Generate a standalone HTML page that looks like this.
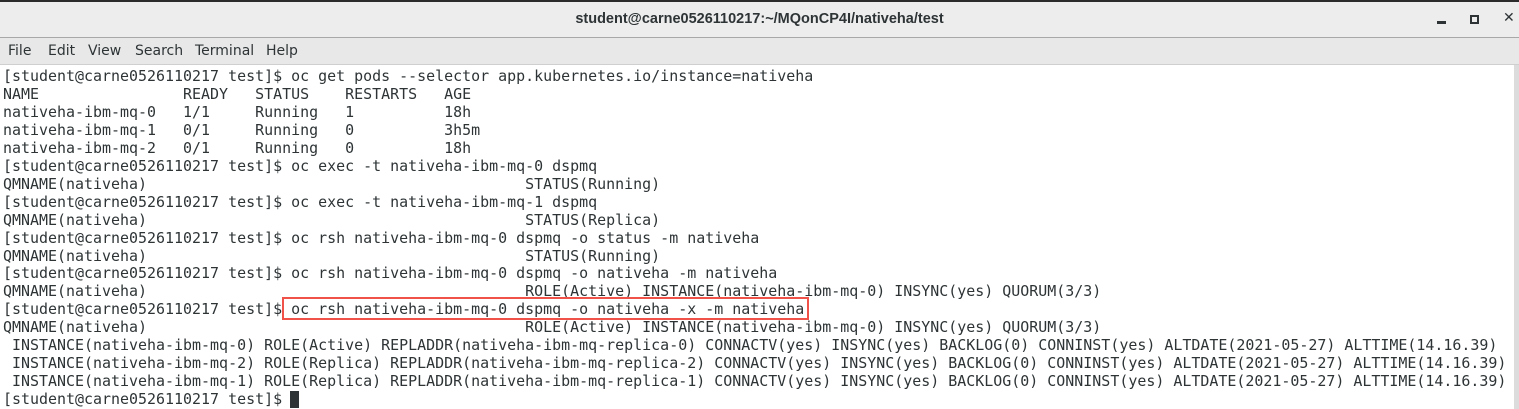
<!DOCTYPE html>
<html><head><style>
html,body{margin:0;padding:0;width:1519px;height:409px;overflow:hidden;background:#fff;font-family:"DejaVu Sans","Liberation Sans",sans-serif}
#top{position:absolute;left:0;top:0;width:1519px;height:2px;background:#2b2b2b}
#title{position:absolute;left:0;top:2px;width:1519px;height:35px;background:#ededed;border-bottom:1px solid #a8a8a8}
#title .t{position:absolute;left:0;right:0;top:9px;text-align:center;font-family:"Liberation Sans",sans-serif;font-size:14.5px;font-weight:bold;color:#2e3436}
#menu{position:absolute;left:0;top:38px;width:1519px;height:26px;background:#e8e8e8;border-bottom:1px solid #cfcfcf;font-size:14px;color:#2e3436}
#menu span{position:absolute;top:5px}
#term{position:absolute;left:3px;top:68px;font-family:"DejaVu Sans Mono","Liberation Mono",monospace;font-size:14.96px;line-height:17.95px;white-space:pre;color:#2e3436}
#sb{position:absolute;left:1514px;top:65px;width:5px;height:344px;background:#dcdcdc}
#box{position:absolute;left:282px;top:297px;width:523px;height:19px;border:2px solid #f0524a}
#cur{position:absolute;left:290px;top:391px;width:9px;height:17px;background:#2e3436}
</style></head><body>
<div id="top"></div>
<div id="title"><div class="t">student@carne0526110217:~/MQonCP4I/nativeha/test</div>
<div style="position:absolute;left:1437px;top:19px;width:9px;height:3px;background:#2e3436"></div>
<div style="position:absolute;left:1470px;top:13px;width:5px;height:5px;border:2px solid #2e3436"></div>
<div style="position:absolute;left:1503px;top:8px;font-size:14px;font-weight:bold;color:#2e3436">✕</div>
</div>
<div id="menu"><span style="left:8px">File</span><span style="left:48px">Edit</span><span style="left:88px">View</span><span style="left:135px">Search</span><span style="left:195px">Terminal</span><span style="left:266px">Help</span></div>
<div id="sb"></div>
<div id="term">[student@carne0526110217 test]$ oc get pods --selector app.kubernetes.io/instance=nativeha
NAME                READY   STATUS    RESTARTS   AGE
nativeha-ibm-mq-0   1/1     Running   1          18h
nativeha-ibm-mq-1   0/1     Running   0          3h5m
nativeha-ibm-mq-2   0/1     Running   0          18h
[student@carne0526110217 test]$ oc exec -t nativeha-ibm-mq-0 dspmq
QMNAME(nativeha)                                          STATUS(Running)
[student@carne0526110217 test]$ oc exec -t nativeha-ibm-mq-1 dspmq
QMNAME(nativeha)                                          STATUS(Replica)
[student@carne0526110217 test]$ oc rsh nativeha-ibm-mq-0 dspmq -o status -m nativeha
QMNAME(nativeha)                                          STATUS(Running)
[student@carne0526110217 test]$ oc rsh nativeha-ibm-mq-0 dspmq -o nativeha -m nativeha
QMNAME(nativeha)                                          ROLE(Active) INSTANCE(nativeha-ibm-mq-0) INSYNC(yes) QUORUM(3/3)
[student@carne0526110217 test]$ oc rsh nativeha-ibm-mq-0 dspmq -o nativeha -x -m nativeha
QMNAME(nativeha)                                          ROLE(Active) INSTANCE(nativeha-ibm-mq-0) INSYNC(yes) QUORUM(3/3)
 INSTANCE(nativeha-ibm-mq-0) ROLE(Active) REPLADDR(nativeha-ibm-mq-replica-0) CONNACTV(yes) INSYNC(yes) BACKLOG(0) CONNINST(yes) ALTDATE(2021-05-27) ALTTIME(14.16.39)
 INSTANCE(nativeha-ibm-mq-2) ROLE(Replica) REPLADDR(nativeha-ibm-mq-replica-2) CONNACTV(yes) INSYNC(yes) BACKLOG(0) CONNINST(yes) ALTDATE(2021-05-27) ALTTIME(14.16.39)
 INSTANCE(nativeha-ibm-mq-1) ROLE(Replica) REPLADDR(nativeha-ibm-mq-replica-1) CONNACTV(yes) INSYNC(yes) BACKLOG(0) CONNINST(yes) ALTDATE(2021-05-27) ALTTIME(14.16.39)
[student@carne0526110217 test]$ </div>
<div id="box"></div>
<div id="cur"></div>
</body></html>
